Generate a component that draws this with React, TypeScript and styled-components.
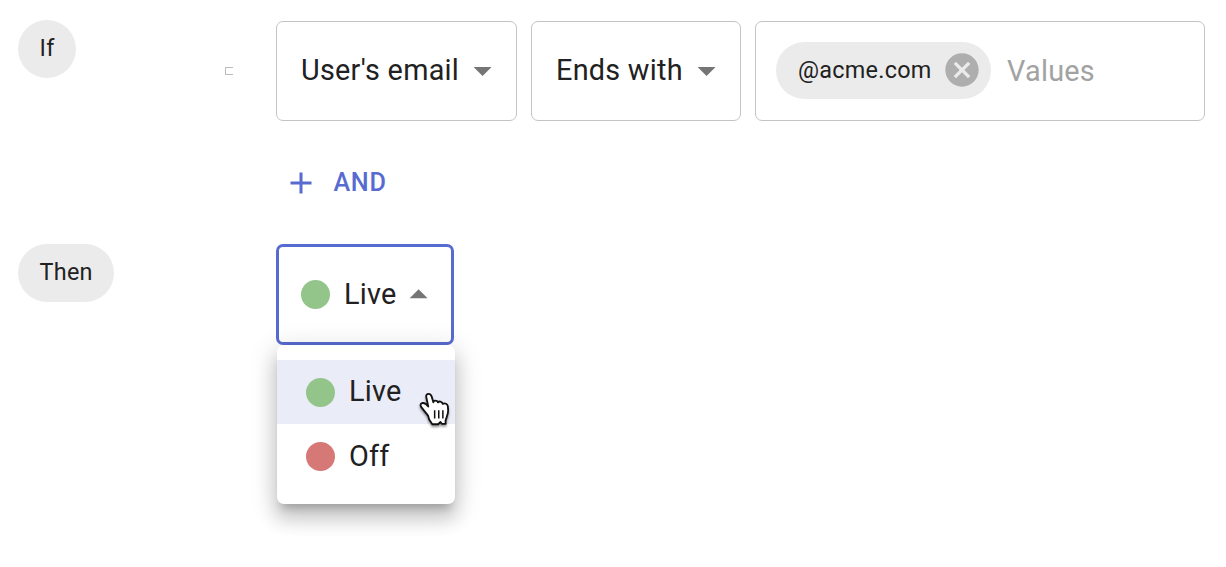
import React from 'react';
import styled, { createGlobalStyle } from 'styled-components';

const GlobalStyle = createGlobalStyle`
  * { box-sizing: border-box; }
  body {
    margin: 0;
    background: #fff;
    color: #212121;
    font-family: Roboto, "Liberation Sans", sans-serif;
    font-size: 28.8px;
    letter-spacing: 0.27px;
    overflow: hidden;
  }
`;

const Page = styled.main`
  width: 1226px;
  height: 567px;
  padding: 20px 21px 0 18px;
`;

const Rule = styled.section<{ $height: number }>`
  display: grid;
  grid-template-columns: 207px 51px 1fr;
  align-items: start;
  height: ${p => p.$height}px;
`;

const Chip = styled.span<{ $width: number }>`
  display: inline-flex;
  align-items: center;
  flex: none;
  width: ${p => p.$width}px;
  height: 58px;
  padding: 0 0 2px 21.5px;
  border-radius: 29px;
  background: #ebebeb;
  font-size: 23.4px;
  line-height: 34px;
`;

const ValueChip = styled(Chip)`
  height: 57px;
  justify-content: space-between;
  padding: 0 9px 0 22px;
`;

const Bracket = styled.span`
  width: 8px;
  height: 8px;
  margin-top: 47px;
  border: 1px solid #bdbdbd;
  border-right: 0;
`;

const Fields = styled.div`
  display: flex;
  gap: 14px;
  padding-top: 1px;
`;

const Select = styled.div<{ $width: number; $open?: boolean }>`
  display: flex;
  align-items: center;
  justify-content: space-between;
  width: ${p => p.$width}px;
  height: ${p => (p.$open ? 101 : 100)}px;
  padding: ${p => (p.$open ? '0 10.5px 0 22px' : '0 12px 0 24px')};
  border: ${p => (p.$open ? '3px solid #586bd0' : '1px solid #c4c4c4')};
  border-radius: 7px;
  line-height: 34px;
  white-space: nowrap;
`;

const Label = styled.span`
  padding-bottom: 2px;
`;

const ValuesField = styled.div`
  display: flex;
  flex: 1;
  align-items: center;
  gap: 16px;
  height: 100px;
  padding: 0 20px 2px;
  border: 1px solid #c4c4c4;
  border-radius: 7px;
`;

const Placeholder = styled.span`
  padding-top: 2px;
  color: #a2a2a2;
`;

const AddButton = styled.button`
  display: flex;
  align-items: center;
  gap: 14.4px;
  margin: 40px 0 0 7px;
  padding: 0;
  border: 0;
  background: none;
  color: #586bd0;
  font: 500 25.2px/44px Roboto, "Liberation Sans", sans-serif;
  letter-spacing: 0.72px;
`;

const SelectAnchor = styled.div`
  position: relative;
  width: 178px;
`;

const Status = styled.span`
  display: flex;
  align-items: center;
  gap: 14px;
`;

const Dot = styled.span<{ $color: string }>`
  width: 29px;
  height: 29px;
  border-radius: 50%;
  background: ${p => p.$color};
`;

const Menu = styled.div`
  position: absolute;
  top: 101px;
  left: 1px;
  width: 178px;
  height: 159px;
  padding-top: 15px;
  border-radius: 7px;
  background: #fff;
  box-shadow:
    0 9px 9px -5.4px rgba(0, 0, 0, 0.2),
    0 14.4px 18px 1.8px rgba(0, 0, 0, 0.14),
    0 5.4px 25.2px 3.6px rgba(0, 0, 0, 0.12);
`;

const MenuItem = styled.div<{ $selected?: boolean }>`
  display: flex;
  align-items: center;
  height: 64px;
  padding-left: 29px;
  background: ${p => (p.$selected ? '#eaecf8' : 'transparent')};
  line-height: 34px;
`;

const Pointer = styled.svg`
  position: absolute;
  top: 144px;
  left: 139px;
  overflow: visible;
  filter: drop-shadow(0 2px 1.3px rgba(0, 0, 0, 0.4));
`;

const Arrow = ({ up }: { up?: boolean }) => (
  <svg width="43.2" height="43.2" viewBox="0 0 24 24" fill="#757575">
    <path d={up ? 'M7 14l5-5 5 5z' : 'M7 10l5 5 5-5z'} />
  </svg>
);

const ClearIcon = () => (
  <svg width="40" height="40" viewBox="0 0 24 24" fill="#aeaeae">
    <path d="M12 2C6.47 2 2 6.47 2 12s4.47 10 10 10 10-4.47 10-10S17.53 2 12 2zm5 13.59L15.59 17 12 13.41 8.41 17 7 15.59 10.59 12 7 8.41 8.41 7 12 10.59 15.59 7 17 8.41 13.41 12 17 15.59z" />
  </svg>
);

const PlusIcon = () => (
  <svg width="36" height="36" viewBox="0 0 24 24" fill="currentColor">
    <path d="M19 13h-6v6h-2v-6H5v-2h6V5h2v6h6v2z" />
  </svg>
);

const HandPointer = () => (
  <Pointer width="43.2" height="43.2" viewBox="0 0 40 40">
    <path
      d="M13 29 L12.2 25.8 C10 22.7 7.7 20.3 5.7 17.5 C4.5 15.8 5.2 14.2 7 13.9 C9 13.6 10.7 15 12.3 17.2 L10.5 8.7 C10 6.8 11 5.4 12.6 5.4 C14.2 5.4 15 6.5 15.5 8.2 L17 13.2 C17 11.3 20.3 11.1 21.3 13.3 C22.2 12 24.9 12.3 25.7 14.7 C28 13.6 30 14.7 30.4 16.8 L30.7 20.5 C31 24 29 27.4 28.3 30.2 L28.4 33.2 L24.7 33.2 L23.6 31.5 L21.4 33.6 L16 33.6 Z"
      fill="#fff"
      stroke="#111"
      strokeWidth="1.7"
      strokeLinejoin="round"
    />
    <path d="M18.2 20.5V28.3M22 20.5V28.3M25.8 20.5V28.3" stroke="#111" strokeWidth="1.4" />
  </Pointer>
);

const GREEN = '#93c58b';
const RED = '#d67876';

export default function App() {
  return (
    <Page>
      <GlobalStyle />
      <Rule $height={224}>
        <Chip $width={58}>If</Chip>
        <Bracket />
        <div>
          <Fields>
            <Select $width={241}><Label>User's email</Label><Arrow /></Select>
            <Select $width={210}><Label>Ends with</Label><Arrow /></Select>
            <ValuesField>
              <ValueChip $width={215}>@acme.com<ClearIcon /></ValueChip>
              <Placeholder>Values</Placeholder>
            </ValuesField>
          </Fields>
          <AddButton><PlusIcon />AND</AddButton>
        </div>
      </Rule>
      <Rule $height={101}>
        <Chip $width={96}>Then</Chip>
        <span />
        <SelectAnchor>
          <Menu>
            <MenuItem $selected><Status><Dot $color={GREEN} /><Label>Live</Label></Status></MenuItem>
            <MenuItem><Status><Dot $color={RED} />Off</Status></MenuItem>
          </Menu>
          <Select $width={178} $open>
            <Status><Dot $color={GREEN} /><Label>Live</Label></Status><Arrow up />
          </Select>
          <HandPointer />
        </SelectAnchor>
      </Rule>
    </Page>
  );
}
